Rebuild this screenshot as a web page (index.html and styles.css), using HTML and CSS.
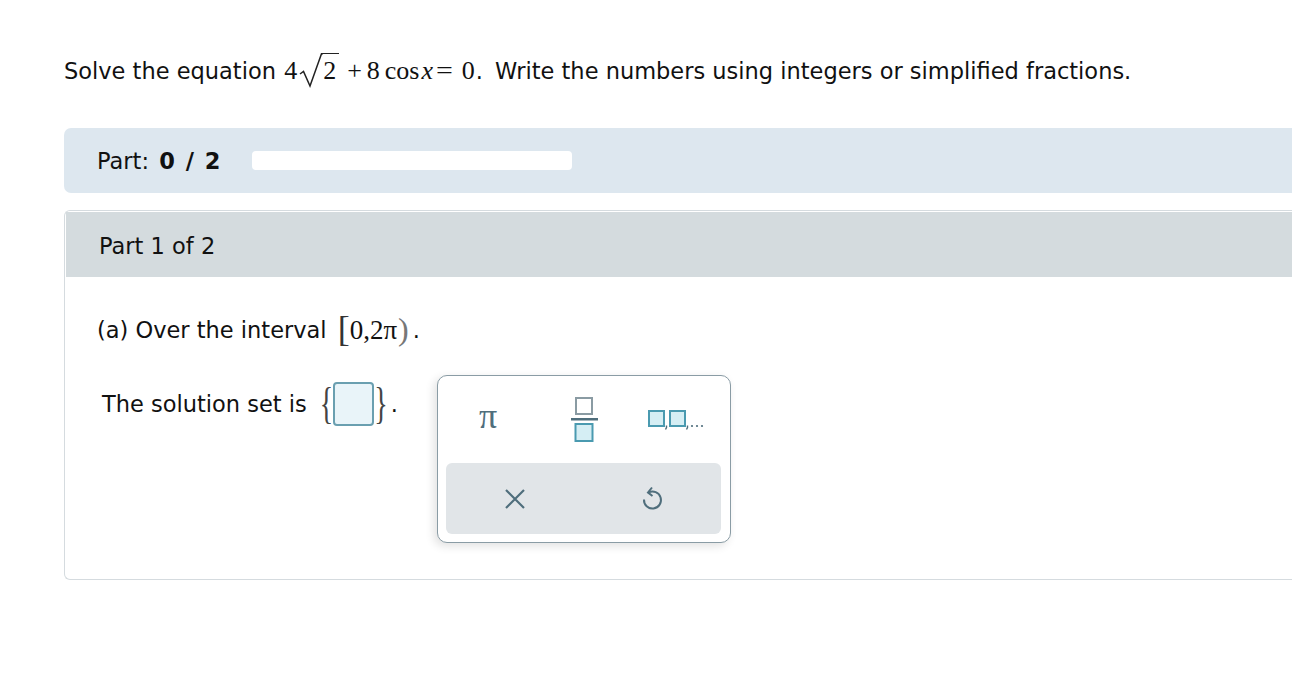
FILE: index.html
```html
<!DOCTYPE html>
<html>
<head>
<meta charset="utf-8">
<link rel="stylesheet" href="styles.css">
</head>
<body>
<div class="page">
  <p class="prompt">Solve the equation <span class="math eq">4<span class="sqrt"><svg class="radsign" width="24" height="35" viewBox="0 0 24 35"><path d="M1 21 L4.5 18.5 L11 33 L22.5 0.75 L24 0.75" stroke="#222" stroke-width="1.5" fill="none"/></svg><span class="radicand">2</span></span><span class="plus">+</span>8<span class="fn">cos</span><i>x</i><span class="eqs">=</span><span class="zero">0</span></span><span class="after">.</span> Write the numbers using integers or simplified fractions.</p>

  <div class="progress">
    <span class="plabel">Part: <b>0 / 2</b></span>
    <span class="pbar"></span>
  </div>

  <div class="card">
    <div class="card-head">Part 1 of 2</div>
    <div class="card-body">
      <p class="q">(a) Over the interval <span class="math interval"><span class="brk">[</span>0,2π<span class="brk gray">)</span></span>.</p>
      <div class="answer">
        <span>The solution set is</span>
        <span class="set"><span class="brace">{</span><span class="box"></span><span class="brace">}</span></span>
        <span class="dot">.</span>
      </div>
    </div>
  </div>

  <div class="keypad">
    <div class="keys">
      <span class="key k1"><span class="pi">π</span></span>
      <span class="key k2">
        <svg width="30" height="46" viewBox="0 0 30 46">
          <rect x="6" y="1" width="16" height="16" fill="#fff" stroke="#8a9ba3" stroke-width="2"/>
          <rect x="1" y="21" width="27" height="2.5" fill="#4f6e7c"/>
          <rect x="5.5" y="27" width="17" height="17" fill="#d5eef4" stroke="#4a9ab0" stroke-width="2"/>
        </svg>
      </span>
      <span class="key k3">
        <svg width="60" height="22" viewBox="0 0 60 22">
          <rect x="1" y="2" width="15" height="15" fill="#d5eef4" stroke="#4a9ab0" stroke-width="2"/>
          <path d="M18.5 16.5 v2 l-1 2" stroke="#4f6e7c" stroke-width="1.4" fill="none"/>
          <rect x="22" y="2" width="15" height="15" fill="#d5eef4" stroke="#4a9ab0" stroke-width="2"/>
          <path d="M39.5 16.5 v2 l-1 2" stroke="#4f6e7c" stroke-width="1.4" fill="none"/>
          <circle cx="44" cy="17" r="1.1" fill="#4f6e7c"/>
          <circle cx="49" cy="17" r="1.1" fill="#4f6e7c"/>
          <circle cx="54" cy="17" r="1.1" fill="#4f6e7c"/>
        </svg>
      </span>
    </div>
    <div class="actions">
      <span class="act">
        <svg width="22" height="22" viewBox="0 0 22 22">
          <path d="M2 2 L20 20 M20 2 L2 20" stroke="#4f6e7c" stroke-width="2.2" fill="none"/>
        </svg>
      </span>
      <span class="act">
        <svg width="22" height="28" viewBox="0 0 22 28">
          <path d="M7.5 7.5 A8.5 8.5 0 1 1 3 14.5" stroke="#4f6e7c" stroke-width="2" fill="none"/>
          <path d="M11 2.5 L7 7.5 L11.5 11" stroke="#4f6e7c" stroke-width="2" fill="none"/>
        </svg>
      </span>
    </div>
  </div>
</div>
</body>
</html>
```

FILE: styles.css
```css
html, body {
  margin: 0;
  padding: 0;
  background: #fff;
  overflow: hidden;
}
body {
  font-family: "DejaVu Sans", Verdana, sans-serif;
  font-size: 22.5px;
  color: #111;
}
.page {
  position: relative;
  width: 1300px;
  padding: 49px 0 0 64px;
  height: 680px;
  box-sizing: border-box;
}
.prompt {
  margin: 0;
  height: 44px;
  line-height: 44px;
  white-space: nowrap;
}
.math {
  font-family: "Liberation Serif", "Times New Roman", serif;
  font-size: 26px;
}
.eq {
  margin-left: 1px;
  margin-right: 1px;
}
.sqrt {
  display: inline-block;
  position: relative;
  padding-left: 23px;
  margin-left: 2px;
  line-height: 1;
}
.radsign {
  position: absolute;
  left: 0;
  top: 0;
}
.radicand {
  display: inline-block;
  border-top: 1.5px solid #222;
  line-height: 27px;
  padding: 3px 3px 0 1px;
}
.plus {
  margin: 0 5px 0 8px;
}
.eqs {
  margin: 0 10px 0 4px;
  display: inline-block;
  transform: scaleX(1.15);
}
.fn {
  margin-left: 5px;
}
.math i {
  margin-left: 2px;
}
.after {
  margin-right: 5px;
}
.progress {
  margin-top: 35px;
  height: 65px;
  background: #dde7ef;
  border-radius: 7px 0 0 7px;
  display: flex;
  align-items: center;
  padding-left: 33px;
}
.plabel {
  white-space: nowrap;
}
.plabel b {
  margin-left: 3px;
  word-spacing: 3px;
}
.pbar {
  margin-left: 32px;
  width: 320px;
  height: 19px;
  background: #fff;
  border-radius: 4px;
}
.card {
  margin-top: 17px;
  border: 1px solid #d5dbdf;
  border-right: none;
  border-radius: 6px 0 0 6px;
  height: 370px;
  box-sizing: border-box;
  padding-top: 1px;
}
.card-head {
  height: 65px;
  background: #d4dbde;
  display: flex;
  align-items: center;
  padding: 3px 0 0 33px;
  box-sizing: border-box;
  margin-left: 1px;
}
.card-body {
  padding: 33px 0 0 32px;
}
.q {
  margin: 0;
  height: 40px;
  display: flex;
  align-items: center;
}
.interval {
  margin-left: 11px;
  margin-right: 4px;
  font-size: 27px;
  display: inline-flex;
  align-items: center;
}
.brk {
  font-size: 36px;
  line-height: 1;
  color: #333;
  position: relative;
  top: -1px;
}
.brk.gray {
  color: #777;
  font-size: 32px;
  margin-left: 1px;
}
.answer {
  margin-top: 30px;
  padding-left: 5px;
  display: flex;
  align-items: center;
  height: 48px;
}
.set {
  display: inline-flex;
  align-items: center;
  margin-left: 13px;
}
.brace {
  font-family: "Liberation Serif", "Times New Roman", serif;
  font-size: 28px;
  color: #444;
  display: inline-block;
  transform: scaleY(1.55);
  line-height: 1;
}
.box {
  width: 37px;
  height: 40px;
  border: 2px solid #6a9fb0;
  border-radius: 4px;
  background: #e9f4f9;
}
.dot {
  margin-left: 3px;
}
.keypad {
  position: absolute;
  left: 437px;
  top: 375px;
  width: 294px;
  height: 168px;
  box-sizing: border-box;
  border: 1px solid #8a9ca5;
  border-radius: 10px;
  background: #fff;
  box-shadow: -3px 3px 10px rgba(0, 0, 0, 0.12);
  padding: 0 9px 8px 8px;
  display: flex;
  flex-direction: column;
}
.keys {
  height: 87px;
  display: flex;
  align-items: center;
}
.key {
  display: flex;
  align-items: center;
  justify-content: center;
}
.k1 { width: 84px; }
.k2 { width: 109px; }
.k3 { width: 77px; }
.pi {
  font-family: "Liberation Serif", "Times New Roman", serif;
  font-size: 36px;
  line-height: 1;
  color: #4f6e7c;
  position: relative;
  top: -4px;
}
.key svg {
  display: block;
}
.actions {
  flex: 1;
  background: #e1e5e8;
  border-radius: 6px;
  display: flex;
  align-items: center;
  justify-content: space-around;
}
.act {
  width: 120px;
  display: flex;
  justify-content: center;
}
```
